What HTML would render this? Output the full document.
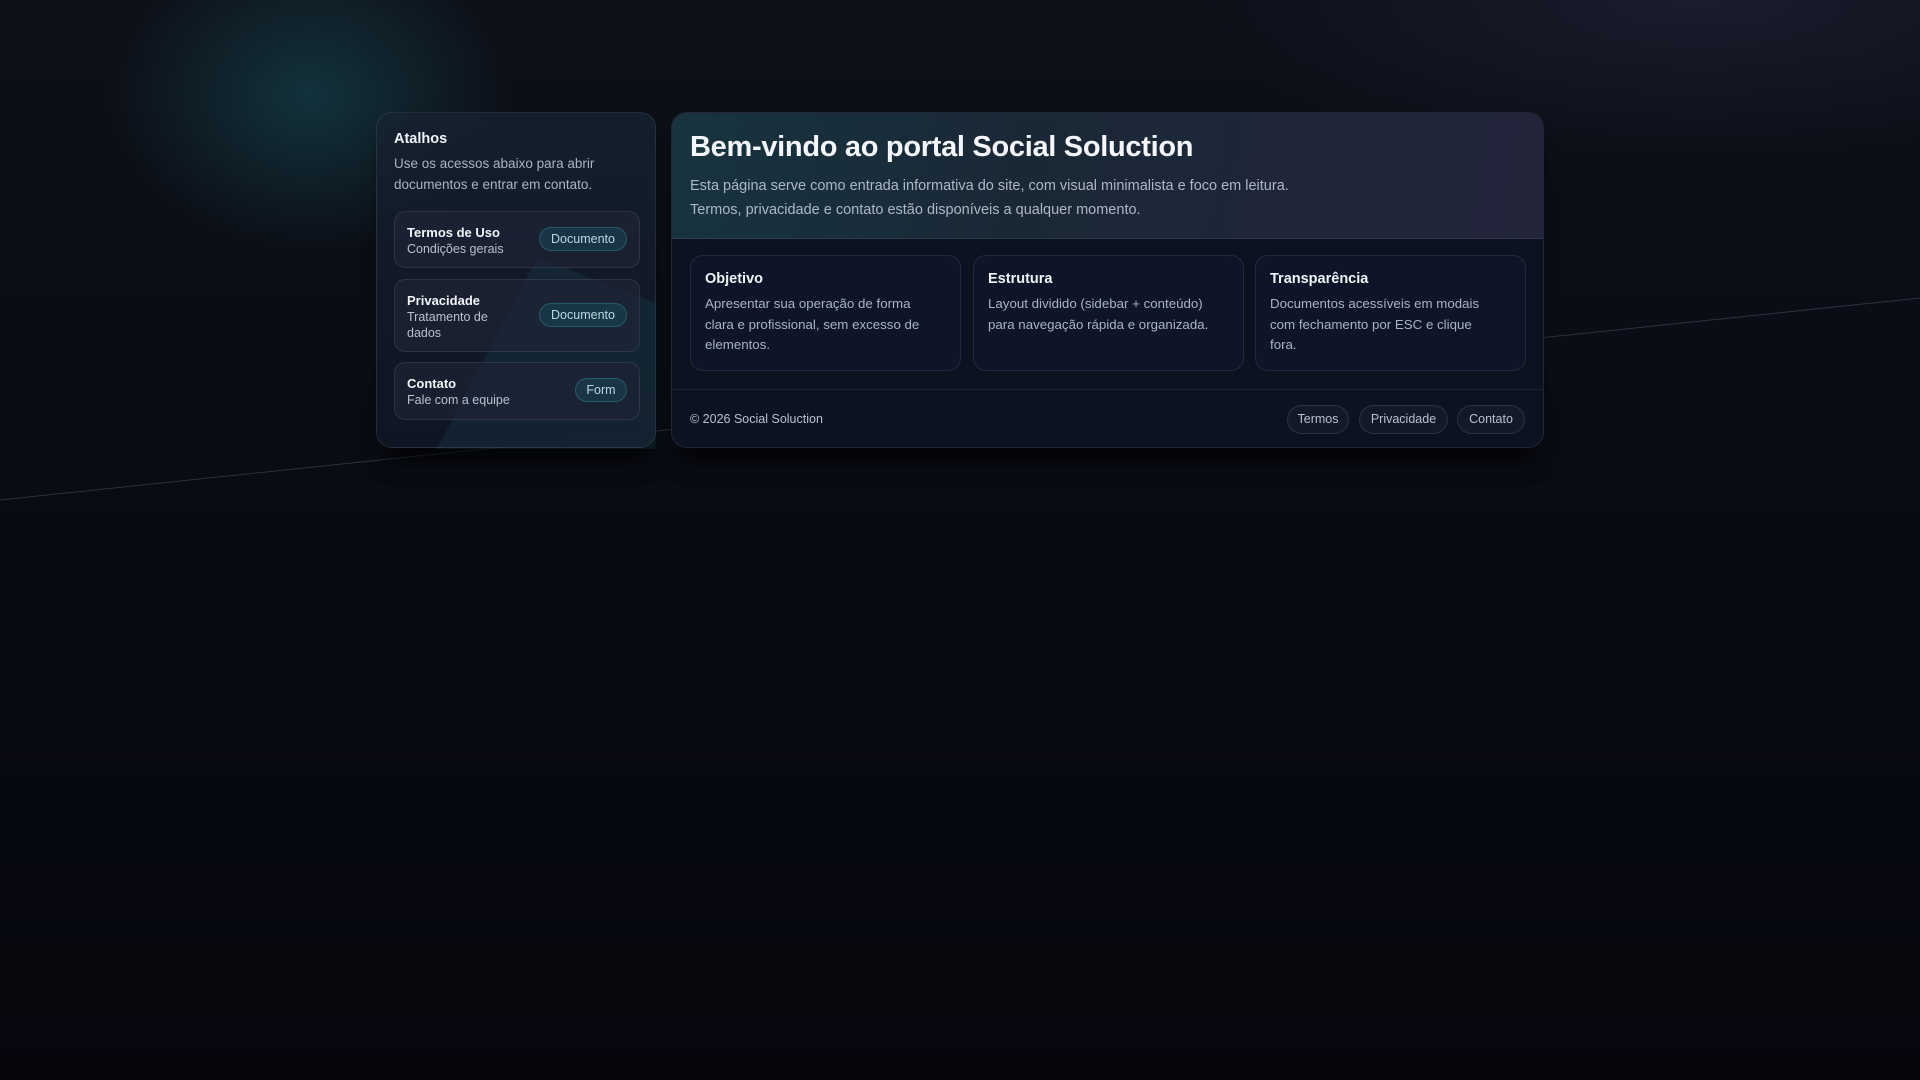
<!DOCTYPE html>
<html><head><meta charset="utf-8"><style>
*{box-sizing:border-box;margin:0;padding:0}
body{width:1920px;height:1080px;overflow:hidden;font-family:"Liberation Sans",sans-serif;color:#e8edf5;
background:radial-gradient(ellipse 200px 160px at 310px 95px,rgba(24,85,95,.5),transparent 100%),
radial-gradient(ellipse 500px 160px at 1700px 0px,rgba(60,55,90,.3),transparent 100%),
linear-gradient(180deg,#0d1019 0%,#080a12 60%,#06070d 100%);position:relative}
.line{position:absolute;left:0;top:0;width:1920px;height:1080px}
.side{position:absolute;left:376px;top:112px;width:280px;height:336px;border-radius:16px;border:1px solid rgba(255,255,255,.09);
background:linear-gradient(180deg,rgba(22,34,48,.85),rgba(16,22,36,.9));box-shadow:0 22px 20px -8px rgba(0,0,0,.7);padding:0 17px}
.side h3{font-size:14.5px;font-weight:bold;margin-top:18px;color:#f1f4f8}
.side p{font-size:13.5px;line-height:21px;color:#a9b3c4;margin-top:6px}
.item{position:absolute;left:17px;width:246px;border:1px solid rgba(255,255,255,.09);border-radius:11px;background:rgba(30,36,52,.7)}
.item b{position:absolute;left:12px;font-size:13px;color:#f1f4f8}
.item span{position:absolute;left:12px;font-size:12.5px;color:#b8c0cd;line-height:16px}
.btn{position:absolute;right:12px;height:24px;border-radius:12px;border:1px solid rgba(60,160,180,.35);background:rgba(25,70,85,.55);color:#b9d8e0;font-size:12.5px;line-height:22px;text-align:center}
.main{position:absolute;left:671px;top:112px;width:873px;height:336px;border-radius:16px;border:1px solid rgba(255,255,255,.09);background:#0c1220;box-shadow:0 22px 20px -8px rgba(0,0,0,.7);overflow:hidden}
.hdr{height:126px;background:linear-gradient(100deg,#17343f 0%,#1a2836 40%,#22243a 100%);border-bottom:1px solid rgba(255,255,255,.08);padding:18px 18px}
.hdr h1{font-size:29px;font-weight:bold;color:#f3f6fa;letter-spacing:-.3px}
.hdr p{font-size:14.5px;line-height:24px;color:#aeb7c6;margin-top:10px}
.card{position:absolute;top:142px;width:271px;height:116px;border:1px solid rgba(255,255,255,.09);border-radius:13px;background:#0e1529;padding:14px 14px}
.card b{font-size:14.5px;color:#f1f4f8;display:block;margin-top:1px}
.card p{font-size:13.3px;line-height:20.5px;color:#a9b3c4;margin-top:7px;width:228px}
.foot{position:absolute;top:276px;left:0;right:0;border-top:1px solid rgba(255,255,255,.07);height:60px}
.foot .c{position:absolute;left:18px;top:22px;font-size:12.5px;color:#b8c0cd}
.pill{position:absolute;top:15px;height:29px;border-radius:15px;border:1px solid rgba(255,255,255,.1);background:#121a2a;color:#b8c0cd;font-size:12.5px;line-height:27px;text-align:center}
</style></head><body>
<svg class="line" viewBox="0 0 1920 1080"><line x1="0" y1="500" x2="1920" y2="298" stroke="rgba(160,180,210,.22)" stroke-width="1"/></svg>
<div class="side">
<svg style="position:absolute;left:0;top:0" width="280" height="336"><polygon points="160,145 279,190 279,336 60,336" fill="rgba(40,130,150,.12)"/></svg>
<h3>Atalhos</h3>
<p>Use os acessos abaixo para abrir documentos e entrar em contato.</p>
<div class="item" style="top:98px;height:57px"><b style="top:13px">Termos de Uso</b><span style="top:29px">Condições gerais</span><div class="btn" style="top:15px;width:88px">Documento</div></div>
<div class="item" style="top:166px;height:73px"><b style="top:13px">Privacidade</b><span style="top:29px;width:100px">Tratamento de dados</span><div class="btn" style="top:23px;width:88px">Documento</div></div>
<div class="item" style="top:249px;height:58px"><b style="top:13px">Contato</b><span style="top:29px">Fale com a equipe</span><div class="btn" style="top:15px;width:52px">Form</div></div>
</div>
<div class="main">
<div class="hdr"><h1>Bem-vindo ao portal Social Soluction</h1>
<p>Esta página serve como entrada informativa do site, com visual minimalista e foco em leitura.<br>Termos, privacidade e contato estão disponíveis a qualquer momento.</p></div>
<div class="card" style="left:18px"><b>Objetivo</b><p>Apresentar sua operação de forma clara e profissional, sem excesso de elementos.</p></div>
<div class="card" style="left:301px"><b>Estrutura</b><p>Layout dividido (sidebar + conteúdo) para navegação rápida e organizada.</p></div>
<div class="card" style="left:583px"><b>Transparência</b><p style="width:215px">Documentos acessíveis em modais com fechamento por ESC e clique fora.</p></div>
<div class="foot"><div class="c">© 2026 Social Soluction</div>
<div class="pill" style="left:615px;width:62px">Termos</div>
<div class="pill" style="left:687px;width:89px">Privacidade</div>
<div class="pill" style="left:785px;width:68px">Contato</div></div>
</div>
</body></html>
